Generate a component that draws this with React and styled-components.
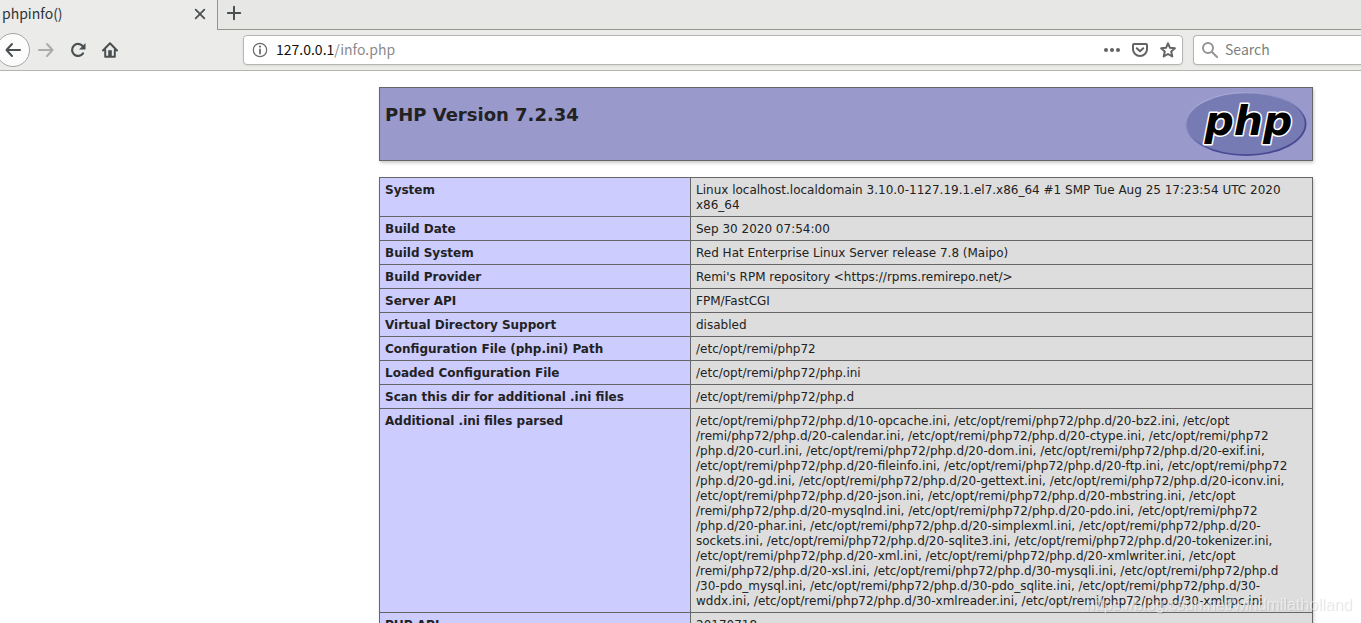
import React, { useState } from 'react';
import styled, { createGlobalStyle } from 'styled-components'

const GlobalStyle = createGlobalStyle`
  body {
    margin: 0;
    background: #fff;
  }

  * {
    box-sizing: border-box;
  }
`

const iniFiles = `/etc/opt/remi/php72/php.d/10-opcache.ini, /etc/opt/remi/php72/php.d/20-bz2.ini, /etc/opt
/remi/php72/php.d/20-calendar.ini, /etc/opt/remi/php72/php.d/20-ctype.ini, /etc/opt/remi/php72
/php.d/20-curl.ini, /etc/opt/remi/php72/php.d/20-dom.ini, /etc/opt/remi/php72/php.d/20-exif.ini,
/etc/opt/remi/php72/php.d/20-fileinfo.ini, /etc/opt/remi/php72/php.d/20-ftp.ini, /etc/opt/remi/php72
/php.d/20-gd.ini, /etc/opt/remi/php72/php.d/20-gettext.ini, /etc/opt/remi/php72/php.d/20-iconv.ini,
/etc/opt/remi/php72/php.d/20-json.ini, /etc/opt/remi/php72/php.d/20-mbstring.ini, /etc/opt
/remi/php72/php.d/20-mysqlnd.ini, /etc/opt/remi/php72/php.d/20-pdo.ini, /etc/opt/remi/php72
/php.d/20-phar.ini, /etc/opt/remi/php72/php.d/20-simplexml.ini, /etc/opt/remi/php72/php.d/20-
sockets.ini, /etc/opt/remi/php72/php.d/20-sqlite3.ini, /etc/opt/remi/php72/php.d/20-tokenizer.ini,
/etc/opt/remi/php72/php.d/20-xml.ini, /etc/opt/remi/php72/php.d/20-xmlwriter.ini, /etc/opt
/remi/php72/php.d/20-xsl.ini, /etc/opt/remi/php72/php.d/30-mysqli.ini, /etc/opt/remi/php72/php.d
/30-pdo_mysql.ini, /etc/opt/remi/php72/php.d/30-pdo_sqlite.ini, /etc/opt/remi/php72/php.d/30-
wddx.ini, /etc/opt/remi/php72/php.d/30-xmlreader.ini, /etc/opt/remi/php72/php.d/30-xmlrpc.ini`

const rows = [
  ['System', 'Linux localhost.localdomain 3.10.0-1127.19.1.el7.x86_64 #1 SMP Tue Aug 25 17:23:54 UTC 2020 x86_64'],
  ['Build Date', 'Sep 30 2020 07:54:00'],
  ['Build System', 'Red Hat Enterprise Linux Server release 7.8 (Maipo)'],
  ['Build Provider', "Remi's RPM repository <https://rpms.remirepo.net/>"],
  ['Server API', 'FPM/FastCGI'],
  ['Virtual Directory Support', 'disabled'],
  ['Configuration File (php.ini) Path', '/etc/opt/remi/php72'],
  ['Loaded Configuration File', '/etc/opt/remi/php72/php.ini'],
  ['Scan this dir for additional .ini files', '/etc/opt/remi/php72/php.d'],
  ['Additional .ini files parsed', iniFiles],
  ['PHP API', '20170718']
]

const Window = styled.div`
  display: flex;
  flex-direction: column;
  height: 100vh;
  overflow: hidden;
`

const Chrome = styled.header`
  flex: none;
  font-family: 'Noto Sans CJK SC', 'Noto Sans', sans-serif;
  font-size: 14px;
  line-height: 20px;
  color: #2e3436;
  background: #ebebea;
  border-bottom: 1px solid #b5b5ae;
`

const TabBar = styled.div`
  display: flex;
  height: 30px;
`

const Tab = styled.div`
  display: flex;
  align-items: center;
  justify-content: space-between;
  width: 217px;
  padding: 0 9px 2px 2px;

  span {
    padding-bottom: 2px;
  }
`

const TabStrip = styled.div`
  flex: 1;
  display: flex;
  align-items: center;
  padding: 0 8px 3px;
  background: #e7e7e6;
  border-left: 1px solid #95958e;
  border-bottom: 1px solid #95958e;
`

const IconButton = styled.button`
  display: flex;
  align-items: center;
  justify-content: center;
  flex: none;
  width: 16px;
  height: 16px;
  padding: 0;
  border: 0;
  background: none;
  color: ${props => props.$color || '#4a5052'};

  svg {
    display: block;
  }
`

const BackButton = styled(IconButton)`
  width: 34px;
  height: 34px;
  margin-left: -4px;
  border: 1px solid #a5a5a3;
  border-radius: 50%;
  background: #fcfcfc;
`

const Toolbar = styled.div`
  display: flex;
  align-items: center;
  height: 40px;
`

const NavButtons = styled.div`
  display: flex;
  align-items: center;
  gap: 16px;
  width: 243px;

  ${BackButton} {
    margin-right: -8px;
  }
`

const Field = styled.div`
  display: flex;
  align-items: center;
  height: 30px;
  background: #fff;
  border: 1px solid #b5b5b1;
  border-radius: 4px;
  box-shadow: 0 1px 2px rgba(0, 0, 0, .08);
`

const UrlField = styled(Field)`
  flex: 1;
  gap: 12px;
  padding: 0 6px 0 8px;
`

const SearchField = styled(Field)`
  width: 168px;
  margin-left: 10px;
  padding-left: 8px;
  gap: 7px;
  border-right: 0;
  border-radius: 4px 0 0 4px;

  input {
    flex: 1;
    min-width: 0;
    padding: 0 0 2px;
    border: 0;
    outline: 0;
    background: none;
    font: inherit;
    color: #2e3436;
  }

  input::placeholder {
    color: #7b7f80;
    opacity: 1;
  }

  label {
    display: flex;
  }
`

const Address = styled.a`
  flex: 1;
  margin-left: -4px;
  padding-bottom: 2px;
  color: #8b8b8b;
  text-decoration: none;

  span {
    color: #111;
  }
`

const Content = styled.main`
  flex: 1;
  min-height: 0;
  overflow: auto;
  scrollbar-width: none;
  padding: 16px 48px 0;
  font-family: 'DejaVu Sans', sans-serif;
  font-size: 12px;
  line-height: 15px;
  color: #222;
`

const Banner = styled.div`
  display: flex;
  justify-content: space-between;
  max-width: 934px;
  margin: 0 0 16px auto;
  padding: 4px 5px;
  background: #99c;
  border: 1px solid #666;
  box-shadow: 1px 2px 3px #ccc;

  h1 {
    margin: 12px 0 0;
    font-size: 18px;
    line-height: 22px;
  }

  svg {
    display: block;
  }
`

const InfoTable = styled.table`
  width: 100%;
  max-width: 934px;
  margin: 0 0 16px auto;
  border-collapse: collapse;
  box-shadow: 1px 2px 3px #ccc;

  th,
  td {
    padding: 5px 5px 3px;
    border: 1px solid #666;
    text-align: left;
    vertical-align: top;
  }

  th {
    width: 311px;
    background: #ccf;
  }

  td {
    background: #ddd;
    white-space: pre-line;
  }
`

const Watermark = styled.div`
  position: fixed;
  right: 9px;
  bottom: 8px;
  font-family: 'Liberation Sans', sans-serif;
  font-size: 16px;
  line-height: 20px;
  color: rgba(255, 255, 255, .5);
  text-shadow: 1px 1px 1px rgba(0, 0, 0, .12);
  pointer-events: none;
`

const Icon = ({ size = 16, width = 2, children }) => (
  <svg
    width={size}
    height={size}
    viewBox='0 0 16 16'
    fill='none'
    stroke='currentColor'
    strokeWidth={width}
    strokeLinecap='round'
    strokeLinejoin='round'
    aria-hidden='true'
  >
    {children}
  </svg>
)

const PhpLogo = () => (
  <svg width='122' height='64' viewBox='0 0 122 64' role='img' aria-label='PHP logo'>
    <defs>
      <linearGradient id='rim' x1='0.2' y1='0' x2='0.8' y2='1'>
        <stop offset='0' stopColor='#b4b6de' />
        <stop offset='0.45' stopColor='#777bb3' />
        <stop offset='0.7' stopColor='#484893' />
      </linearGradient>
    </defs>
    <ellipse cx='61' cy='32' rx='60.5' ry='32' fill='url(#rim)' />
    <ellipse cx='60.7' cy='31.8' rx='59' ry='30.5' fill='#777bb3' />
    <text
      x='19.5'
      y='42.5'
      fontFamily='DejaVu Sans, sans-serif'
      fontSize='41'
      fontWeight='bold'
      fontStyle='italic'
      fill='#000'
      stroke='#fff'
      strokeWidth='3'
      strokeLinejoin='round'
      paintOrder='stroke'
    >
      php
    </text>
  </svg>
)

const App = () => {
  const [search, setSearch] = useState('')

  return (
    <Window>
      <GlobalStyle />
      <Chrome>
        <TabBar>
          <Tab>
            <span>phpinfo()</span>
            <IconButton aria-label='Close tab'>
              <Icon width={1.8}><path d='M3.7 3.7l8.6 8.6M12.3 3.7l-8.6 8.6' /></Icon>
            </IconButton>
          </Tab>
          <TabStrip>
            <IconButton aria-label='New tab'>
              <Icon><path d='M8 1.8v12.4M1.8 8h12.4' /></Icon>
            </IconButton>
          </TabStrip>
        </TabBar>
        <Toolbar>
          <NavButtons>
            <BackButton aria-label='Back'>
              <Icon><path d='M15 8H1.5M7 2L1.5 8L7 14' /></Icon>
            </BackButton>
            <IconButton aria-label='Forward' $color='#aaacac' disabled>
              <Icon><path d='M1 8h13.5M9 2l5.5 6L9 14' /></Icon>
            </IconButton>
            <IconButton aria-label='Reload'>
              <Icon width={2.2}>
                <path d='M12.6 4A6 6 0 1 0 13 11.4' />
                <path d='M15.5 1v6.6H9z' fill='currentColor' stroke='none' />
              </Icon>
            </IconButton>
            <IconButton aria-label='Home'>
              <Icon>
                <path d='M1 8.5L8 1.3l7 7.2M3.2 8v6.8h9.6V8' />
                <path d='M6.2 8.2h3.6V15H6.2z' fill='currentColor' stroke='none' />
              </Icon>
            </IconButton>
          </NavButtons>
          <UrlField>
            <IconButton aria-label='Site information' $color='#6b6b6b'>
              <Icon width={1.2}>
                <circle cx='8' cy='8' r='6.7' />
                <path d='M8 7.5v4' strokeWidth='1.8' />
                <circle cx='8' cy='4.6' r='1.1' fill='currentColor' stroke='none' />
              </Icon>
            </IconButton>
            <Address href='#'><span>127.0.0.1</span>/info.php</Address>
            <IconButton aria-label='Page actions' $color='#636363'>
              <Icon>
                <g fill='currentColor' stroke='none'>
                  <circle cx='2' cy='8' r='2' />
                  <circle cx='8' cy='8' r='2' />
                  <circle cx='14' cy='8' r='2' />
                </g>
              </Icon>
            </IconButton>
            <IconButton aria-label='Save to Pocket' $color='#636363'>
              <Icon>
                <path d='M2 2h12a1 1 0 0 1 1 1v4.2a7 6.8 0 0 1-14 0V3a1 1 0 0 1 1-1z' />
                <path d='M4.8 6.3L8 9.3l3.2-3' />
              </Icon>
            </IconButton>
            <IconButton aria-label='Bookmark' $color='#636363'>
              <Icon>
                <path d='M8 1.3l2 4.5 4.9.5-3.7 3.3 1.1 4.9L8 12l-4.3 2.5 1.1-4.9L1.1 6.3 6 5.8z' />
              </Icon>
            </IconButton>
          </UrlField>
          <SearchField>
            <label htmlFor='search' aria-label='Search'>
              <IconButton as='span' $color='#949494'>
                <Icon>
                  <circle cx='6' cy='6' r='5' />
                  <path d='M10 10l5 5' />
                </Icon>
              </IconButton>
            </label>
            <input
              id='search'
              type='text'
              placeholder='Search'
              value={search}
              onChange={(e) => setSearch(e.target.value)}
            />
          </SearchField>
        </Toolbar>
      </Chrome>
      <Content>
        <Banner>
          <h1>PHP Version 7.2.34</h1>
          <PhpLogo />
        </Banner>
        <InfoTable>
          <tbody>
            {rows.map(([name, value]) => (
              <tr key={name}>
                <th scope='row'>{name}</th>
                <td>{value}</td>
              </tr>
            ))}
          </tbody>
        </InfoTable>
      </Content>
      <Watermark>https://blog.csdn.net/windmilatholland</Watermark>
    </Window>
  );
}

export default App;
